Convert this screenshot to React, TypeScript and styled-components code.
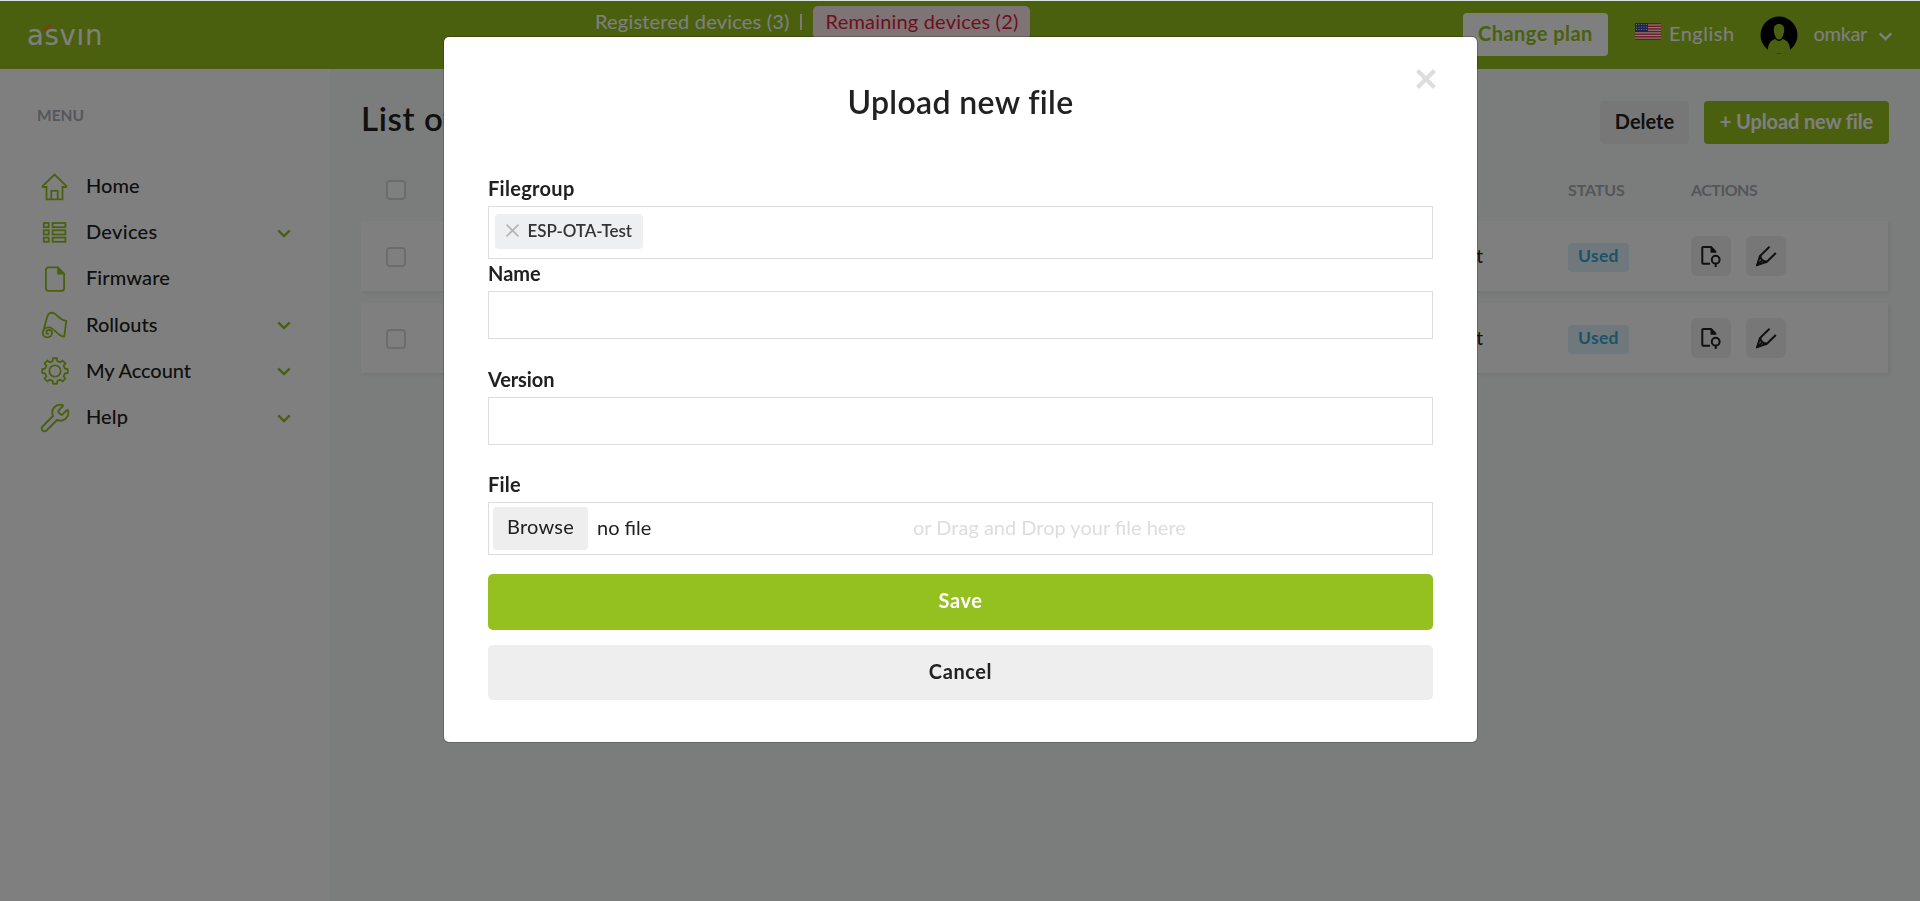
import React from "react";
import styled, { createGlobalStyle } from "styled-components";
import { Wrench } from "lucide-react";

const GREEN = "#94c11f";

const GlobalStyle = createGlobalStyle`
  * { box-sizing: border-box; }
  body { margin: 0; font-family: Lato, "Liberation Sans", sans-serif; color: #212121; overflow: hidden; }
  button { font-family: inherit; border: 0; margin: 0; cursor: pointer; }
`;

const Page = styled.div`
  height: 901px;
  display: flex;
  flex-direction: column;
  background: #f7fbf9;
`;

/* ---------- header ---------- */
const TopBar = styled.header`
  flex: none;
  height: 69px;
  border-top: 1px solid #fff;
  background: ${GREEN};
  color: #fff;
  font-size: 20px;
  display: flex;
  align-items: flex-start;
`;
const Logo = styled.a`
  position: relative;
  width: 80px;
  margin: 18px 0 0 27px;
  font: 400 27.5px/32px "DejaVu Sans", sans-serif;
  letter-spacing: 0.7px;
`;
const LogoAccent = styled.svg`
  position: absolute;
  left: 15px;
  top: 3px;
`;
const Quota = styled.div`
  margin: 5px 0 0 488px;
  display: flex;
  line-height: 30px;
  letter-spacing: 0.19px;
  white-space: pre;
`;
const Divider = styled.span`
  width: 2px;
  height: 16px;
  margin: 8px 11px 0 10px;
  background: #fff;
  opacity: 0.9;
`;
const RemainingPill = styled.span`
  height: 33px;
  width: 217px;
  padding-left: 13px;
  border-radius: 5px;
  background: #fde8ec;
  color: #dc1f3a;
`;
const UserArea = styled.div`
  margin: 12px 0 0 auto;
  padding-right: 16px;
  height: 43px;
  display: flex;
  align-items: center;
`;
const BarText = styled.span<{ $spacing?: number }>`
  padding-bottom: 4px;
  line-height: 24px;
  letter-spacing: ${(p) => p.$spacing ?? 0}px;
`;
const Flag = styled.svg`
  margin: 0 8px 7px 27px;
`;
const Avatar = styled.svg`
  margin: 0 16px 0 25px;
`;

/* ---------- buttons ---------- */
const SmallButton = styled.button<{ $tone: "white" | "grey" | "green"; $width: number; $spacing?: number }>`
  height: 43px;
  width: ${(p) => p.$width}px;
  padding: 0 0 4px;
  border-radius: 4px;
  font-size: 20px;
  font-weight: 700;
  white-space: nowrap;
  letter-spacing: ${(p) => p.$spacing ?? 0}px;
  background: ${(p) => ({ white: "#fff", grey: "#efefef", green: GREEN })[p.$tone]};
  color: ${(p) => ({ white: GREEN, grey: "#212121", green: "#fff" })[p.$tone]};
`;
const WideButton = styled.button<{ $primary?: boolean }>`
  display: block;
  width: 100%;
  height: ${(p) => (p.$primary ? 56 : 55)}px;
  margin-top: ${(p) => (p.$primary ? 19 : 15)}px;
  padding: 0 0 4px;
  border-radius: 5px;
  font-size: 20px;
  font-weight: 700;
  letter-spacing: 0.6px;
  background: ${(p) => (p.$primary ? GREEN : "#eee")};
  color: ${(p) => (p.$primary ? "#fff" : "#212121")};
`;

/* ---------- sidebar ---------- */
const Body = styled.div`
  flex: 1;
  display: flex;
`;
const Sidebar = styled.aside`
  width: 330px;
  background: #fff;
`;
const MenuTitle = styled.h2`
  margin: 36px 0 0 37px;
  font-size: 15.5px;
  line-height: 20px;
  font-weight: 700;
  color: #a9afb6;
`;
const Nav = styled.nav`
  margin-top: 37px;
  padding: 0 39px 0 41px;
`;
const NavItem = styled.a`
  height: 46.2px;
  display: flex;
  align-items: center;
  font-size: 20px;
  font-weight: 500;
`;
const NavIcon = styled.span`
  width: 28px;
  height: 28px;
  margin: 3px 17px 0 0;
  color: ${GREEN};
  display: flex;
  align-items: center;
  justify-content: center;
  svg { flex: none; }
`;
const NavLabel = styled.span<{ $spacing: number }>`
  flex: 1;
  letter-spacing: ${(p) => p.$spacing}px;
`;
const NavChevron = styled.svg`
  margin-top: 4px;
`;

/* ---------- main ---------- */
const Main = styled.main`
  flex: 1;
  padding: 32px 31px 0 31px;
`;
const TitleRow = styled.div`
  height: 43px;
  display: flex;
  align-items: center;
  gap: 15px;
`;
const PageTitle = styled.h1`
  flex: 1;
  margin: 0 0 9px;
  font-size: 33px;
  line-height: 40px;
  font-weight: 600;
  letter-spacing: 0.6px;
`;
const Table = styled.div`
  margin-top: 27px;
  width: 1527px;
  display: flex;
  flex-direction: column;
  gap: 12px;
`;
const columns = `
  display: grid;
  grid-template-columns: 25px 500px 597px 85px 123px 1fr;
  align-items: center;
`;
const HeadRow = styled.div`
  ${columns}
  height: 38px;
  font-size: 16px;
  font-weight: 700;
  color: #a9adb2;
`;
const HeadCell = styled.span<{ $spacing: number; $col: number }>`
  grid-column: ${(p) => p.$col};
  padding-bottom: 2px;
  letter-spacing: ${(p) => p.$spacing}px;
`;
const Row = styled.div`
  ${columns}
  height: 70px;
  background: #fff;
  box-shadow: 2px 2px 4px rgba(0, 0, 0, 0.07);
`;
const Checkbox = styled.span<{ $drop?: number }>`
  grid-column: 2;
  width: 20px;
  height: 20px;
  margin-top: ${(p) => p.$drop ?? 0}px;
  border: 2px solid #d6d8d8;
  border-radius: 4px;
  background: #fff;
`;
const GroupCell = styled.span`
  grid-column: 3;
  padding-bottom: 2px;
  text-align: right;
  font-size: 19px;
`;
const Badge = styled.span`
  grid-column: 5;
  width: 61px;
  height: 29px;
  margin-top: 2px;
  padding-left: 10px;
  border-radius: 4px;
  background: #dff1fb;
  color: #3aa5cf;
  font-size: 17.5px;
  line-height: 26px;
  font-weight: 700;
  letter-spacing: 0.3px;
`;
const Actions = styled.div`
  display: flex;
  gap: 15px;
`;
const IconButton = styled.button`
  width: 40px;
  height: 40px;
  padding: 0;
  border-radius: 6px;
  background: #efefef;
  display: grid;
  place-items: center;
`;

/* ---------- dialog ---------- */
const Overlay = styled.div`
  position: fixed;
  inset: 0;
  top: 1px;
  padding: 36px 0 0 444px;
  background: rgba(0, 0, 0, 0.5);
`;
const TopLine = styled.div`
  position: fixed;
  inset: 0 0 auto;
  height: 1px;
  background: #dce3dd;
`;
const Dialog = styled.section`
  position: relative;
  width: 1033px;
  height: 705px;
  padding: 45px 44px 0;
  border-radius: 5px;
  background: #fff;
  box-shadow: 0 0 0 1px rgba(0, 0, 0, 0.2);
`;
const CloseButton = styled.button`
  position: absolute;
  top: 32px;
  right: 41px;
  padding: 0;
  background: none;
  line-height: 0;
`;
const DialogTitle = styled.h2`
  margin: 0 0 54px;
  font-size: 32px;
  line-height: 40px;
  font-weight: 600;
  letter-spacing: 0.35px;
  text-align: center;
`;
const Label = styled.label<{ $spacing?: number }>`
  display: block;
  height: 30px;
  font-size: 20px;
  line-height: 24px;
  font-weight: 700;
  letter-spacing: ${(p) => p.$spacing ?? 0}px;
`;
const Box = styled.div<{ $height: number; $gap: number }>`
  height: ${(p) => p.$height}px;
  margin-bottom: ${(p) => p.$gap}px;
  border: 1px solid #ddd;
  display: flex;
  align-items: center;
  font-size: 20px;
`;
const Tag = styled.span`
  width: 148px;
  height: 35px;
  margin: 0 0 3px 6px;
  padding: 0 0 1px 11px;
  border-radius: 4px;
  background: #eeeff1;
  color: #333;
  font-size: 17px;
  font-weight: 600;
  letter-spacing: -0.08px;
  display: flex;
  align-items: center;
  gap: 8.5px;
`;
const Browse = styled.button`
  width: 95px;
  height: 43px;
  margin-left: 4px;
  padding: 0 0 5px;
  border-radius: 4px;
  background: #eee;
  color: #212121;
  font-size: 20px;
  letter-spacing: 0.2px;
`;
const FileName = styled.span`
  width: 325px;
  padding: 0 0 3px 9px;
`;
const DropHint = styled.span`
  padding-bottom: 3px;
  color: #ddd;
`;

/* ---------- icons ---------- */
const line = { fill: "none", stroke: "currentColor", strokeWidth: 1.8 } as const;

const HomeIcon = () => (
  <svg width="28" height="28" {...line}>
    <path d="M5.5 14H1.8v-1.1L13.5 1.6l11.7 11.3V14h-3.700v12.400h-16z" />
    <path d="M10.3 26.4v-8.600h6.400v8.600" />
  </svg>
);
const ListIcon = () => (
  <svg width="28" height="28" {...line}>
    {[4, 11.3, 18.6].map((y) => (
      <g key={y}>
        <rect x="2.8" y={y} width="4.9" height="4.2" />
        <rect x="11.6" y={y} width="12.8" height="4.2" />
      </g>
    ))}
  </svg>
);
const FileIcon = () => (
  <svg width="28" height="28" {...line}>
    <path d="M7.5 2.4h9.3l6.3 6.3v14.5a2.6 2.6 0 0 1-2.6 2.6h-13a2.6 2.6 0 0 1-2.6-2.6V5a2.6 2.6 0 0 1 2.6-2.6z" />
    <path d="M16.2 2v7.4h7.4z" fill="currentColor" stroke="none" />
  </svg>
);
const ScrollIcon = () => (
  <svg width="28" height="28" {...line} strokeLinejoin="round" strokeLinecap="round">
    <path d="M2 21 6.3 5.4C7.2 2.3 10 .9 13 2.3c3.8 1.9 5.6 6.8 12.3 7.500L23.200 25.700C16.500 25.500 13.500 16.500 8 16.300 4.200 16.200 1.700 18.600 1.700 21.700c0 2.700 2.200 4.600 4.800 4.600s4.500-1.800 4.500-4.200c0-1.900-1.400-3.100-3-3.100s-2.700 1-2.700 2.300 1 1.700 1.900 1.500" />
  </svg>
);

const gearPath = Array.from({ length: 8 }, (_, tooth) =>
  [
    [-13, 10.2],
    [-9, 12.9],
    [9, 12.9],
    [13, 10.2],
  ].map(([deg, r]) => {
    const a = ((tooth * 45 + deg - 90) * Math.PI) / 180;
    return `${(14 + r * Math.cos(a)).toFixed(2)} ${(14 + r * Math.sin(a)).toFixed(2)}`;
  })
)
  .flat()
  .join("L");
const GearIcon = () => (
  <svg width="28" height="28" {...line} strokeLinejoin="round">
    <path d={`M${gearPath}z`} />
    <circle cx="14" cy="14" r="5.7" />
  </svg>
);
const WrenchIcon = () => <Wrench size={32} strokeWidth={1.45} />;

const Chevron = ({ color = GREEN, width = 14 }: { color?: string; width?: number }) => (
  <NavChevron width={width} height="9" viewBox="0 0 14 9">
    <path d="M1.2 1.3 7 7.1l5.8-5.8" fill="none" stroke={color} strokeWidth="2.400" />
  </NavChevron>
);
const Cross = ({ size, color, weight }: { size: number; color: string; weight: number }) => {
  const near = weight * 0.36;
  const far = size - near;
  return (
    <svg width={size} height={size}>
      <path d={`M${near} ${near}L${far} ${far}M${far} ${near}L${near} ${far}`} stroke={color} strokeWidth={weight} />
    </svg>
  );
};
const FilePinIcon = () => (
  <svg width="22" height="22" fill="none" stroke="#212121" strokeWidth="2">
    <path d="M10 18.8H3.3a1 1 0 0 1-1-1V3a1 1 0 0 1 1-1H11l4.8 5" />
    <path d="M10.5 1.3v6.4h6.3z" fill="#212121" stroke="none" />
    <circle cx="15.7" cy="14.7" r="3.9" />
    <path d="M15.7 18.5V22" />
  </svg>
);
const PenIcon = () => (
  <svg width="22" height="22" fill="none" stroke="#212121" strokeWidth="2">
    <path d="M14.5 1.8 5 11 2.2 20l9.600-3.200 9-8.800" />
    <path d="M5.3 10.8c.4 3.400 2.800 5.600 6.500 6M2 20.300l5.300-5" />
    <path d="m1 21.2 1.800-5 3.200 3.400z" fill="#212121" stroke="none" />
  </svg>
);

const nav: { label: string; spacing: number; icon: React.FC; open?: boolean }[] = [
  { label: "Home", spacing: 0, icon: HomeIcon },
  { label: "Devices", spacing: 0.3, icon: ListIcon, open: true },
  { label: "Firmware", spacing: 0.1, icon: FileIcon },
  { label: "Rollouts", spacing: 0, icon: ScrollIcon, open: true },
  { label: "My Account", spacing: -0.08, icon: GearIcon, open: true },
  { label: "Help", spacing: 0.1, icon: WrenchIcon, open: true },
];

export default function App() {
  return (
    <>
      <GlobalStyle />
      <Page>
        <TopBar>
          <Logo>
            asvın
            <LogoAccent width="12" height="10">
              <path d="M1.5 8.5 9.5 2" stroke="#f0821e" strokeWidth="2.6" />
            </LogoAccent>
          </Logo>
          <Quota>
            <span>Registered devices (3)</span>
            <Divider />
            <RemainingPill>Remaining devices (2)</RemainingPill>
          </Quota>
          <UserArea>
            <SmallButton $tone="white" $width={145} $spacing={0.47}>Change plan</SmallButton>
            <Flag width="26" height="17">
              <rect width="26" height="17" fill="#fff" />
              {[0, 1, 2, 3, 4, 5, 6].map((i) => (
                <rect key={i} y={i * 2.62} width="26" height="1.4" fill="#e0303c" />
              ))}
              <rect width="13" height="9" fill="#3c4a9c" />
              {[1.5, 4, 6.5].map((y) =>
                [1.5, 4, 6.5, 9, 11.5].map((x) => <circle key={`${x}-${y}`} cx={x} cy={y} r="0.6" fill="#fff" />)
              )}
            </Flag>
            <BarText $spacing={0.5}>English</BarText>
            <Avatar width="38" height="38">
              <circle cx="19" cy="19" r="18.5" fill="#000" />
              <path d="M19 8c-3.600 0-5.500 2.600-5.200 6.200.3 3.800 1.800 9.300 5.200 9.300s4.900-5.500 5.200-9.300C24.500 10.600 22.600 8 19 8z" fill={GREEN} />
              <path d="M8 35.200c-.4-6 2-11 7.500-12.200 1.200 1.300 2.300 1.900 3.500 1.900s2.300-.6 3.500-1.900c5.500 1.200 7.900 6.200 7.500 12.200-6 2.800-16 2.800-22 0z" fill={GREEN} />
            </Avatar>
            <BarText $spacing={-0.35}>omkar</BarText>
            <Chevron color="#fff" width={37} />
          </UserArea>
        </TopBar>
        <Body>
          <Sidebar>
            <MenuTitle>MENU</MenuTitle>
            <Nav>
              {nav.map(({ label, spacing, icon: Icon, open }) => (
                <NavItem key={label}>
                  <NavIcon><Icon /></NavIcon>
                  <NavLabel $spacing={spacing}>{label}</NavLabel>
                  {open && <Chevron />}
                </NavItem>
              ))}
            </Nav>
          </Sidebar>
          <Main>
            <TitleRow>
              <PageTitle>List of files</PageTitle>
              <SmallButton $tone="grey" $width={89}>Delete</SmallButton>
              <SmallButton $tone="green" $width={185} $spacing={-0.12}>+ Upload new file</SmallButton>
            </TitleRow>
            <Table>
              <HeadRow>
                <Checkbox />
                <HeadCell $col={5} $spacing={-0.15}>STATUS</HeadCell>
                <HeadCell $col={6} $spacing={-0.5}>ACTIONS</HeadCell>
              </HeadRow>
              {[1, 2].map((id) => (
                <Row key={id}>
                  <Checkbox $drop={2} />
                  <GroupCell>ESP-OTA-Test</GroupCell>
                  <Badge>Used</Badge>
                  <Actions>
                    <IconButton><FilePinIcon /></IconButton>
                    <IconButton><PenIcon /></IconButton>
                  </Actions>
                </Row>
              ))}
            </Table>
          </Main>
        </Body>
      </Page>
      <TopLine />
      <Overlay>
        <Dialog>
          <CloseButton>
            <Cross size={20} color="#ddd" weight={4.2} />
          </CloseButton>
          <DialogTitle>Upload new file</DialogTitle>
          <Label $spacing={0.3}>Filegroup</Label>
          <Box $height={53} $gap={2}>
            <Tag>
              <Cross size={13} color="#b5b5b5" weight={1.6} />
              ESP-OTA-Test
            </Tag>
          </Box>
          <Label>Name</Label>
          <Box $height={48} $gap={28} />
          <Label $spacing={-0.1}>Version</Label>
          <Box $height={48} $gap={27} />
          <Label $spacing={0.2}>File</Label>
          <Box $height={53} $gap={0}>
            <Browse>Browse</Browse>
            <FileName>no file</FileName>
            <DropHint>or Drag and Drop your file here</DropHint>
          </Box>
          <WideButton $primary>Save</WideButton>
          <WideButton>Cancel</WideButton>
        </Dialog>
      </Overlay>
    </>
  );
}
